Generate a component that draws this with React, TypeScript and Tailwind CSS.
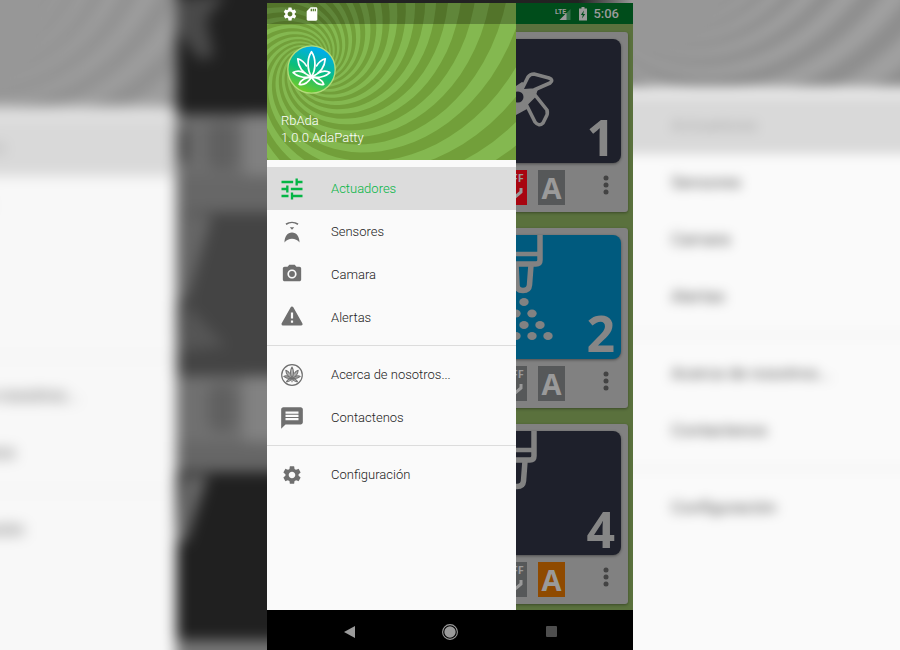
import type { ReactNode } from "react";
import { MdCameraAlt, MdMessage, MdSdCard, MdSettings, MdTune } from "react-icons/md";

const ARMS = 19;
const TWIST = 1.75;
const PHASE = 0.235;

function spiralArm(cx: number, cy: number, start: number, reach: number) {
  const width = Math.PI / ARMS;
  const inner: string[] = [];
  const outer: string[] = [];
  for (let i = 0; i <= 90; i++) {
    const r = 6 * Math.pow(reach / 6, i / 90);
    const a = start - TWIST * Math.log(r);
    inner.push(`${(cx + r * Math.cos(a)).toFixed(1)} ${(cy + r * Math.sin(a)).toFixed(1)}`);
    outer.unshift(
      `${(cx + r * Math.cos(a + width)).toFixed(1)} ${(cy + r * Math.sin(a + width)).toFixed(1)}`
    );
  }
  return `M${inner.join("L")}L${outer.join("L")}Z`;
}

const swirlPath = Array.from({ length: ARMS }, (_, i) =>
  spiralArm(45, 60, PHASE + (i * 2 * Math.PI) / ARMS, 420)
).join("");

function Swirl({ className }: { className: string }) {
  return (
    <svg className={className} viewBox="0 0 249 157" preserveAspectRatio="xMinYMin slice" aria-hidden="true">
      <path d={swirlPath} fill="currentColor" />
    </svg>
  );
}

function LeafStrokes() {
  return (
    <>
      <path d="M24 31C19.500 24 19.500 13 24 6.500C28.500 13 28.500 24 24 31Z" />
      <path d="M23 31C15.500 27.500 11 21 10.500 13.500C14 14.500 17 17 19 20.500" />
      <path d="M25 31C32.500 27.500 37 21 37.500 13.500C34 14.500 31 17 29 20.500" />
      <path d="M24 31.500C17 32.500 10.500 31 6 27C9.500 24.800 14 25.500 17.500 27.500" />
      <path d="M24 31.500C31 32.500 37.500 31 42 27C38.500 24.800 34 25.500 30.500 27.500" />
      <path d="M24 31.500C18.500 31.500 14 34 12 38.500C16 39.500 20 37.500 24 31.500Z" />
      <path d="M24 31.500C29.500 31.500 34 34 36 38.500C32 39.500 28 37.500 24 31.500Z" />
    </>
  );
}

function Logo() {
  return (
    <svg className="size-[49px]" viewBox="0 0 48 48" role="img" aria-label="RbAda">
      <defs>
        <linearGradient id="logo" x1="0.7" y1="0" x2="0.3" y2="1">
          <stop offset="0.1" stopColor="#00aee6" />
          <stop offset="0.55" stopColor="#0cbf78" />
          <stop offset="1" stopColor="#7ccb20" />
        </linearGradient>
      </defs>
      <circle cx="24" cy="24" r="23.200" fill="url(#logo)" stroke="#b4dc7c" strokeWidth="1.300" />
      <g fill="none" stroke="#fff" strokeWidth="1.700" strokeLinecap="round" strokeLinejoin="round">
        <LeafStrokes />
      </g>
    </svg>
  );
}

function LeafIcon() {
  return (
    <svg className="size-[22px]" viewBox="0 0 48 48" aria-hidden="true">
      <circle cx="24" cy="24" r="22.500" fill="none" stroke="currentColor" strokeWidth="2.600" />
      <g fill="currentColor" fillOpacity="0.55" stroke="currentColor" strokeWidth="2.200" strokeLinejoin="round">
        <LeafStrokes />
        <path d="M24 31v9" />
      </g>
    </svg>
  );
}

function SensorIcon() {
  return (
    <svg className="h-[22px] w-4" viewBox="0 0 16 22" aria-hidden="true">
      <path d="M2 3.200C5.500 0.900 10.500 0.900 14 3.200" fill="none" stroke="currentColor" strokeWidth="1.700" />
      <path d="M5.800 6.200h4.400L8 8.800Z" fill="currentColor" />
      <path d="M0.500 21.500C0.500 15.500 3.500 11.500 8 11.500S15.500 15.500 15.500 21.500C13.500 19 11 17.800 8 17.800S2.500 19 0.500 21.500Z" fill="currentColor" />
    </svg>
  );
}

function WarningIcon() {
  return (
    <svg className="mb-[3px] h-5 w-[22px]" viewBox="0 0 22 20" aria-hidden="true">
      <path d="M11 2L20 18H2Z" fill="currentColor" stroke="currentColor" strokeWidth="3" strokeLinejoin="round" />
      <path d="M11 6.500V12.500M11 14.500V16.700" stroke="#fafafa" strokeWidth="2.200" />
    </svg>
  );
}

type Item = { label: string; icon: ReactNode; active?: boolean };

const groups: Item[][] = [
  [
    { label: "Actuadores", icon: <MdTune size={28} />, active: true },
    { label: "Sensores", icon: <SensorIcon /> },
    { label: "Camara", icon: <MdCameraAlt className="mb-0.5" size={22} /> },
    { label: "Alertas", icon: <WarningIcon /> },
  ],
  [
    { label: "Acerca de nosotros...", icon: <LeafIcon /> },
    { label: "Contactenos", icon: <MdMessage size={26} /> },
  ],
  [{ label: "Configuración", icon: <MdSettings size={22} /> }],
];

function Drawer() {
  return (
    <aside className="absolute inset-y-0 left-0 flex w-[249px] flex-col bg-[#fafafa]">
      <header className="relative h-[157px] overflow-hidden bg-[#84b850]">
        <Swirl className="absolute inset-0 size-full text-[#729f3a]" />
        <div className="relative flex h-[21px] items-center gap-1.5 bg-black/27 pl-[15px] text-white">
          <MdSettings size={16} />
          <MdSdCard size={16} />
        </div>
        <div className="relative pt-[21px] pl-5">
          <Logo />
        </div>
        <div className="relative pt-[18px] pl-3.5 text-[13px] leading-[17px] font-light text-white">
          <p>RbAda</p>
          <p>1.0.0.AdaPatty</p>
        </div>
      </header>
      <nav className="divide-y divide-[#dcdcdc]">
        {groups.map((group, i) => (
          <ul key={i} className="pt-[7px] pb-1.5">
            {group.map((item) => (
              <li key={item.label}>
                <button
                  className={
                    item.active
                      ? "flex h-[43px] w-full items-center gap-[25px] bg-[#dcdcdc] pl-[11px] text-left text-[13px] font-light text-[#04b545]"
                      : "flex h-[43px] w-full items-center gap-[25px] pl-[11px] text-left text-[13px] font-light text-[#222]"
                  }
                >
                  <span
                    className={
                      item.active
                        ? "flex w-7 shrink-0 justify-center"
                        : "flex w-7 shrink-0 justify-center text-[#6f6f6f]"
                    }
                  >
                    {item.icon}
                  </span>
                  {item.label}
                </button>
              </li>
            ))}
          </ul>
        ))}
      </nav>
    </aside>
  );
}

function Fan() {
  return (
    <svg className="h-[124px] w-[105px]" viewBox="0 0 105 124" aria-hidden="true">
      <path d="M0 47L6 43L22 50L20 56L24 62L11 70L0 76Z" fill="#828282" />
      <g fill="#1e202b" stroke="#828282" strokeWidth="3.600" strokeLinejoin="round">
        <path d="M5 52L12 38Q14 35 18 35L33 39Q38 41 34 44L18 51Z" />
        <path d="M10 65L19 56L31 71Q32 75 30 78L27 84Q23 88 19 83Z" />
      </g>
      <circle cx="2" cy="58" r="5.500" fill="#1e202b" />
    </svg>
  );
}

function Nozzle({ shift, spray }: { shift: number; spray: boolean }) {
  return (
    <svg className="h-[124px] w-[105px]" viewBox="0 0 105 124" aria-hidden="true">
      <g transform={`translate(${shift} 0)`} fill="none" stroke="#828282" strokeWidth="5.500">
        <path d="M24 0V25Q24 29 20 29H-20" />
        <path d="M-20 19H24" strokeWidth="4.500" />
        <path d="M15 30L13.500 50Q13 55.500 7 55.500Q1 55.500 1 50L0 30" />
      </g>
      {spray && (
        <g fill="#828282">
          <ellipse cx="8" cy="67" rx="4.700" ry="4" />
          <ellipse cx="0" cy="78.500" rx="4.700" ry="4" />
          <ellipse cx="16" cy="78.500" rx="4.700" ry="4" />
          <ellipse cx="8" cy="90" rx="4.700" ry="4" />
          <ellipse cx="24" cy="90" rx="4.700" ry="4" />
          <ellipse cx="0" cy="101" rx="4.700" ry="4" />
          <ellipse cx="16" cy="101" rx="4.700" ry="4" />
          <ellipse cx="32" cy="101" rx="4.700" ry="4" />
        </g>
      )}
    </svg>
  );
}

type CardProps = { number: string; tile: string; off: string; auto: string; art: ReactNode };

function ActuatorCard({ number, tile, off, auto, art }: CardProps) {
  return (
    <article className="rounded-[3px] bg-[#818181] p-[7px] shadow-[0_1px_3px_rgba(0,0,0,0.35)]">
      <div className={`relative flex justify-end overflow-hidden rounded-lg shadow-[0_1px_3px_rgba(0,0,0,0.4)] ${tile}`}>
        {art}
        <span className="absolute right-1.5 bottom-px font-['Noto_Sans','Open_Sans',sans-serif] text-[50px] leading-[50px] font-bold text-[#868686]">
          {number}
        </span>
      </div>
      <div className="mt-[7px] flex h-[35px] justify-end gap-[11px] font-['Open_Sans',sans-serif] font-bold text-[#9a9a9a]">
        <button className={`flex w-[27px] flex-col items-center ${off}`}>
          <span className="text-[11px] leading-[15px]">OFF</span>
          <svg className="h-4 w-5" viewBox="0 0 20 16" aria-hidden="true">
            <path d="M4 7L10 13L17 7V3" fill="none" stroke="currentColor" strokeWidth="3" />
          </svg>
        </button>
        <button className={`w-[27px] text-[29px] leading-[35px] ${auto}`}>A</button>
        <button aria-label="Opciones" className="ml-[15px] w-[30px] pb-1.5">
          <svg className="mx-auto h-5 w-1.5 text-[#434343]" viewBox="0 0 6 20" fill="currentColor" aria-hidden="true">
            <circle cx="3" cy="3" r="2.500" />
            <circle cx="3" cy="10" r="2.500" />
            <circle cx="3" cy="17" r="2.500" />
          </svg>
        </button>
      </div>
    </article>
  );
}

function StatusBar() {
  return (
    <div className="flex h-[21px] items-center justify-end bg-[#004d1b] pr-3.5 text-[#9b9b9b]">
      <svg className="mr-2 h-4 w-4" viewBox="0 0 16 16" aria-hidden="true">
        <path d="M15.500 3V14H4.500Z" fill="#336f49" />
        <path d="M11.500 7V14H4.500Z" fill="currentColor" />
        <text x="0" y="8" fontSize="7" fontWeight="700" fill="currentColor" className="font-['Roboto',sans-serif]">
          LTE
        </text>
      </svg>
      <svg className="mr-1.5 h-3.5 w-2" viewBox="0 0 8 14" aria-hidden="true">
        <path d="M2.500 0h3v1.500H8V13.500H0V1.500h2.500Z" fill="currentColor" />
        <path d="M5 3.500L1.800 8H3.800L3 11.500L6.200 7H4.200Z" fill="#004d1b" />
      </svg>
      <span className="text-[13px] leading-none font-medium">5:06</span>
    </div>
  );
}

function NavBar() {
  return (
    <div className="flex h-10 shrink-0 items-center justify-center bg-black pt-[3px] text-[#9b9b9b]">
      <button aria-label="Atrás" className="flex w-[101px] justify-center">
        <svg className="h-3 w-[11px]" viewBox="0 0 11 12" aria-hidden="true">
          <path d="M0 6L11 0V12Z" fill="currentColor" />
        </svg>
      </button>
      <button aria-label="Inicio" className="flex w-[101px] justify-center">
        <svg className="size-4" viewBox="0 0 16 16" aria-hidden="true">
          <circle cx="8" cy="8" r="7.400" fill="none" stroke="currentColor" strokeWidth="1.100" />
          <circle cx="8" cy="8" r="5.700" fill="currentColor" />
        </svg>
      </button>
      <button aria-label="Recientes" className="flex w-[101px] justify-center">
        <span className="size-[11px] rounded-[1px] bg-[#4e4e4e]" />
      </button>
    </div>
  );
}

function Phone() {
  return (
    <main className="flex w-[366px] shrink-0 flex-col">
      <div className="h-[3px] bg-linear-to-r from-[#222] from-85% to-[#999]" />
      <div className="relative flex-1 overflow-hidden bg-[#5a713d]">
        <StatusBar />
        <div className="flex flex-col gap-4 px-[5px] pt-2">
          <ActuatorCard number="1" tile="bg-[#1e202b]" off="bg-[#a80510]" auto="bg-[#565859]" art={<Fan />} />
          <ActuatorCard number="2" tile="bg-[#005a7e]" off="bg-[#565859]" auto="bg-[#565859]" art={<Nozzle shift={0} spray />} />
          <ActuatorCard number="4" tile="bg-[#1e202b]" off="bg-[#565859]" auto="bg-[#8f4a00]" art={<Nozzle shift={-6} spray={false} />} />
        </div>
        <Drawer />
      </div>
      <NavBar />
    </main>
  );
}

function BlurredMenu() {
  return (
    <div className="divide-y-4 divide-[#f2f2f2] text-[#555]">
      {groups.map((group, i) => (
        <div key={i} className={i === 0 ? "pb-2" : "py-2"}>
          {group.map((item) => (
            <div
              key={item.label}
              className={
                item.active
                  ? "flex h-[57px] items-center bg-[#d9d9d9] pl-[58px] text-[17px] text-[#aaa]"
                  : "flex h-[57px] items-center pl-[58px] text-[17px]"
              }
            >
              {item.label}
            </div>
          ))}
        </div>
      ))}
    </div>
  );
}

function LeftBackdrop() {
  return (
    <div className="flex flex-1 justify-end overflow-hidden" aria-hidden="true">
      <div className="-mt-5 -mr-5 -mb-5 flex shrink-0 blur-[7px]">
        <div className="w-[315px] bg-[#f8f8f8]">
          <div className="h-[127px] overflow-hidden bg-[#9e9e9e]">
            <Swirl className="-mt-[80px] h-[260px] w-[420px] text-[#909090]" />
          </div>
          <div className="h-3 bg-[#e4e4e4]" />
          <BlurredMenu />
        </div>
        <div className="flex w-[111px] flex-col bg-[#202020]">
          <div className="h-[134px]">
            <svg className="h-[134px] w-[111px] text-[#666]" viewBox="0 0 111 134">
              <path d="M0 18L50 14L30 40L38 76L24 80L8 60L0 50Z" fill="currentColor" fillOpacity="0.6" />
            </svg>
          </div>
          <div className="flex h-[62px] bg-[#6d6d6d]">
            <div className="mt-4 h-8 w-3 bg-[#4a4a4a]" />
            <div className="mt-2 ml-5 h-12 w-7 rounded-xl bg-[#606060]" />
            <div className="ml-2 flex-1 bg-[#808080]" />
          </div>
          <div className="h-[36px] bg-[#676767]" />
          <div className="h-[164px] bg-[#444]">
            <svg className="h-[164px] w-[111px] text-[#666]" viewBox="0 0 111 164">
              <path d="M0 0L36 4L12 84L0 90Z" fill="currentColor" />
              <path d="M8 90L50 134L0 140Z" fill="currentColor" fillOpacity="0.5" />
            </svg>
          </div>
          <div className="flex h-[66px] bg-[#707070]">
            <div className="mt-2 ml-8 h-12 w-7 rounded-xl bg-[#606060]" />
            <div className="ml-2 flex-1 bg-[#828282]" />
          </div>
          <div className="h-[30px] bg-[#666]" />
          <div className="h-[168px]">
            <svg className="h-[168px] w-[111px] text-[#666]" viewBox="0 0 111 168">
              <path d="M6 4L32 4L10 70L0 70Z" fill="currentColor" />
            </svg>
          </div>
          <div className="flex-1 bg-[#777]" />
        </div>
      </div>
    </div>
  );
}

function RightBackdrop() {
  return (
    <div className="flex flex-1 overflow-hidden" aria-hidden="true">
      <div className="-m-5 flex-1 bg-[#fafafa] blur-[6px]">
        <div className="flex h-[107px] overflow-hidden bg-[#a0a0a0]">
          <Swirl className="-mt-[108px] -ml-[40px] h-[240px] w-[380px] shrink-0 text-[#8e8e8e]" />
        </div>
        <div className="h-2.5 bg-[#ececec]" />
        <BlurredMenu />
      </div>
    </div>
  );
}

export default function App() {
  return (
    <div className="flex h-screen overflow-hidden bg-[#fafafa] font-['Roboto',sans-serif]">
      <LeftBackdrop />
      <Phone />
      <RightBackdrop />
    </div>
  );
}
